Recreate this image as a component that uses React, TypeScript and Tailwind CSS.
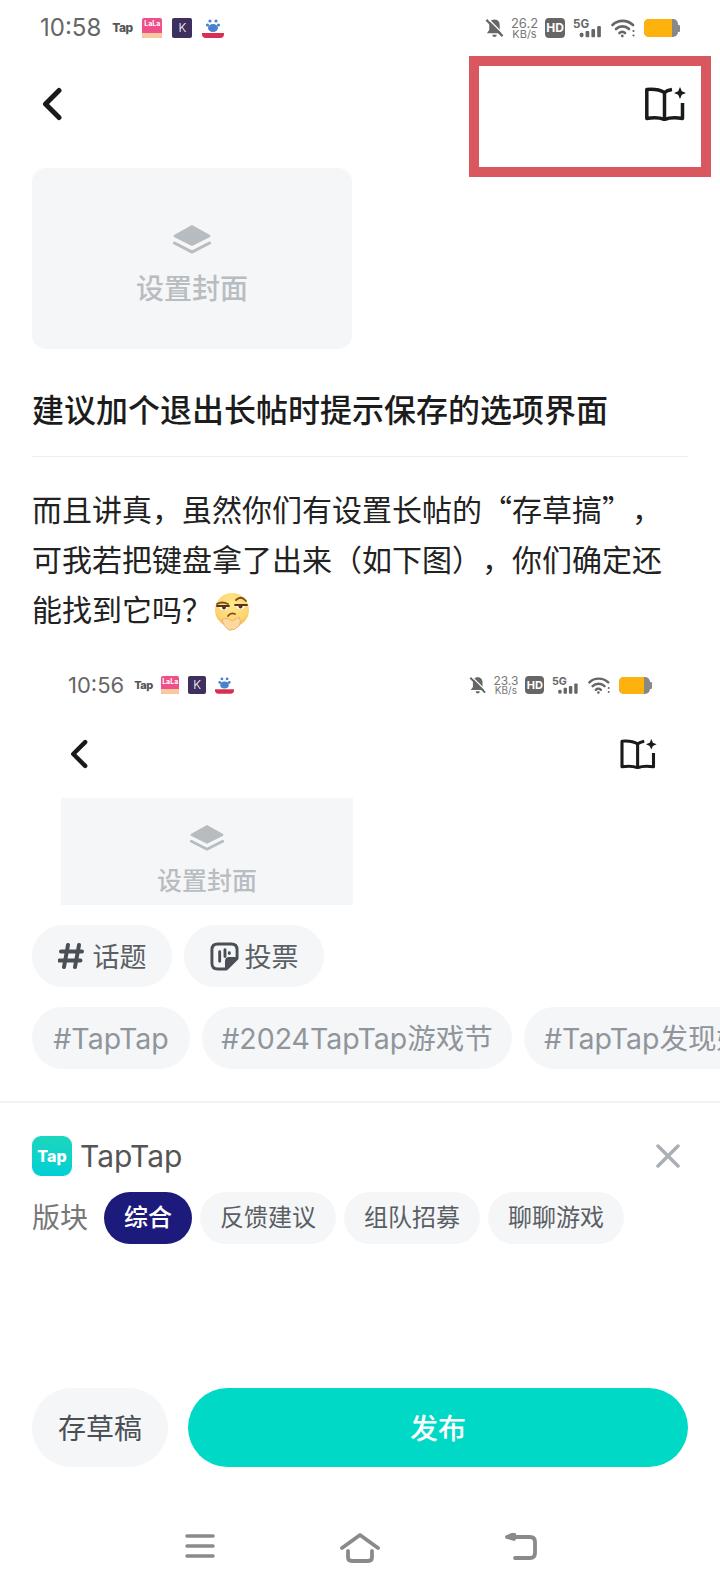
import type { ReactNode } from 'react'

// One status bar, drawn at two sizes: the real one and the one inside the pasted screenshot
function AppBadges({ small }: { small?: boolean }) {
  const box = small ? 'h-[18px] w-[18px]' : 'h-[20px] w-[20px]'
  return (
    <div className={`flex items-center ${small ? 'gap-[9px]' : 'gap-[10px]'}`}>
      <span className={`font-extrabold tracking-[-0.5px] text-[#555] leading-none ${small ? 'w-[18px] text-[11px]' : 'w-[20px] text-[12px]'}`}>Tap</span>
      <div className={`${box} flex flex-col overflow-hidden rounded-[2px] bg-[#f0508a]`}>
        <span className="flex-1 text-center text-[7px] leading-[12px] font-bold text-white">LaLa</span>
        <span className="h-[5px] bg-[#f8c8a0]" />
      </div>
      <div className={`${box} flex items-center justify-center rounded-[2px] bg-[#3e2f5e] text-[12px] leading-none font-light text-white`}>K</div>
      <svg viewBox="0 0 22 20" className={small ? 'h-[18px] w-[19px]' : 'h-[20px] w-[22px]'}>
        <circle cx="8" cy="3" r="1.6" fill="#4a80d0" />
        <circle cx="14" cy="3" r="1.6" fill="#4a80d0" />
        <circle cx="5.5" cy="7" r="1.6" fill="#4a80d0" />
        <circle cx="16.5" cy="7" r="1.6" fill="#4a80d0" />
        <ellipse cx="11" cy="10" rx="5" ry="4" fill="#4a80d0" />
        <path d="M0 15 H22 V16 Q22 20 18 20 H4 Q0 20 0 16 Z" fill="#d83050" />
      </svg>
    </div>
  )
}

function StatusIcons({ speed, small }: { speed: string; small?: boolean }) {
  const k = small ? 0.92 : 1
  return (
    <div className="flex items-center gap-[8px]">
      <svg viewBox="0 0 20 20" width={19 * k} height={20 * k}>
        <path d="M10 1 C6 1 4.5 4 4.5 7 V12 L2 15.5 H18 L15.5 12 V7 C15.5 4 14 1 10 1 Z M7.5 17 H12.5 Q12 19.5 10 19.5 Q8 19.5 7.5 17 Z" fill="#666" />
        <path d="M1.5 1.5 L18.5 18.5" stroke="#666" strokeWidth="2.4" />
        <path d="M3.5 0.5 L20 17" stroke="#fff" strokeWidth="1.4" />
      </svg>
      <div className={`flex flex-col items-center text-[#777] ${small ? 'w-[23px] text-[12px]' : 'w-[25px] text-[13px]'}`}>
        <span className={small ? 'leading-[11px]' : 'leading-[12px]'}>{speed}</span>
        <span className={small ? 'text-[10px] leading-[9px]' : 'text-[11px] leading-[10px]'}>KB/s</span>
      </div>
      <div className={`flex items-center justify-center rounded-[4px] bg-[#666] font-bold text-white ${small ? 'h-[18px] w-[19px] text-[11px]' : 'h-[20px] w-[20px] text-[12px]'}`}>HD</div>
      <svg viewBox="0 0 31 20" width={30 * k} height={20 * k}>
        <text x="0" y="10" fontSize="12" fontWeight="700" fill="#666" fontFamily="Inter, sans-serif">5G</text>
        <rect x="7" y="15" width="3.8" height="4.500" rx="1.5" fill="#666" />
        <rect x="13" y="13" width="3.8" height="6.500" rx="1" fill="#666" />
        <rect x="19" y="11" width="3.8" height="8.500" rx="1" fill="#666" />
        <rect x="25" y="8" width="3.8" height="11.500" rx="1" fill="#666" />
      </svg>
      <svg viewBox="0 0 25 20" width={25 * k} height={20 * k} fill="none" stroke="#666" strokeWidth="2.6" strokeLinecap="round">
        <path d="M1.5 7 C7 1.5 16 1.5 22 7" />
        <path d="M5 11 C8.5 7.5 14.5 7.5 18 11" />
        <path d="M8.5 15 C10 13.500 12.500 13.500 14 15" />
        <circle cx="11.3" cy="18" r="1.4" fill="#666" stroke="none" />
        <circle cx="22.5" cy="13" r="1.1" fill="#666" stroke="none" />
        <circle cx="22.5" cy="17.5" r="1.1" fill="#666" stroke="none" />
      </svg>
      <div className="flex items-center">
        <div className={`flex overflow-hidden rounded-[5px] bg-[#888] ${small ? 'h-[17px] w-[31px]' : 'h-[18px] w-[34px]'}`}>
          <div className={`bg-[#fdb20e] ${small ? 'w-[25px]' : 'w-[28px]'}`} />
        </div>
        <div className="h-[7px] w-[2px] rounded-r-[1px] bg-[#888]" />
      </div>
    </div>
  )
}

function Chevron({ className }: { className: string }) {
  return (
    <svg viewBox="0 0 20 34" className={className} fill="none" stroke="#1a1a1a" strokeWidth="5" strokeLinecap="round" strokeLinejoin="round">
      <path d="M17 3.500 L3.500 17 L17 30.500" />
    </svg>
  )
}

function BookSpark({ className }: { className: string }) {
  return (
    <svg viewBox="0 0 41 34" className={className}>
      <path d="M27 2.500 C24 3 21.500 3.800 19.500 5.500 C15 2.800 8 2 1.800 2.500 V31.500 C8 30.500 15 30.800 19.500 32.500 C24 30.800 31 30.500 37.500 31.500 V16" fill="none" stroke="#1a1a1a" strokeWidth="3.500" strokeLinejoin="round" />
      <path d="M19.500 5.500 V31" stroke="#1a1a1a" strokeWidth="3.500" />
      <path d="M35 0 L36.800 4.200 L41 6 L36.800 7.800 L35 12 L33.200 7.800 L29 6 L33.200 4.200 Z" fill="#1a1a1a" />
    </svg>
  )
}

function Layers({ className }: { className: string }) {
  return (
    <svg viewBox="0 0 38 30" className={className}>
      <path d="M19 0 L37 10 Q38 11 37 12 L19 21 L1 12 Q0 11 1 10 Z" fill="#b6bcbf" />
      <path d="M1.5 18 L19 27 L36.5 18" fill="none" stroke="#b6bcbf" strokeWidth="3" strokeLinecap="round" />
    </svg>
  )
}

function ThinkingFace() {
  return (
    <svg viewBox="0 0 36 38" className="ml-[2px] inline-block h-[38px] w-[36px] align-[-10px]">
      <defs>
        <radialGradient id="face" cx="0.5" cy="0.35" r="0.7">
          <stop offset="0" stopColor="#ffe98f" />
          <stop offset="0.7" stopColor="#fdd56e" />
          <stop offset="1" stopColor="#f2b24f" />
        </radialGradient>
      </defs>
      <circle cx="18" cy="17" r="17" fill="url(#face)" />
      <path d="M3 11 Q8 8 14 11 M22 7 Q27 2 32 8" fill="none" stroke="#7a4a1e" strokeWidth="1.8" strokeLinecap="round" />
      <path d="M4 13 H15 L12 17 H7 Z M21 12 H32 L29 16 H24 Z" fill="#fff" />
      <path d="M3 13 H15 M21 12 H33" stroke="#5a3414" strokeWidth="1.8" strokeLinecap="round" />
      <circle cx="10" cy="14.5" r="2" fill="#5a3414" />
      <circle cx="26.500" cy="13.500" r="2" fill="#5a3414" />
      <path d="M14 23 Q17 19 21 21" fill="none" stroke="#8a4a1e" strokeWidth="1.8" strokeLinecap="round" />
      <path d="M8 26 Q14 24 18 28 L25 24 Q28 28 25 33 Q20 38 15 37 Q9 33 8 26 Z" fill="#fdd9a0" stroke="#efb272" strokeWidth="1" />
    </svg>
  )
}

function Pill({ children, className }: { children: ReactNode; className: string }) {
  return <div className={`flex shrink-0 items-center justify-center rounded-full bg-[#f5f6f8] ${className}`}>{children}</div>
}

const tags = [
  { label: '#TapTap', width: 'w-[158px]' },
  { label: '#2024TapTap游戏节', width: 'w-[310px]' },
  { label: '#TapTap发现好游戏', width: 'w-[298px]' },
]

const boards = ['反馈建议', '组队招募', '聊聊游戏']

// full-width punctuation, written as escapes so it stays full-width
const bodyLines = [
  '而且讲真\uFF0C虽然你们有设置长帖的\u201C存草搞\u201D\uFF0C',
  '可我若把键盘拿了出来\uFF08如下图\uFF09\uFF0C你们确定还',
  '能找到它吗\uFF1F',
]

export default function App() {
  return (
    <div className="relative flex h-[1592px] w-[720px] flex-col overflow-hidden bg-white font-[Inter,'Noto_Sans_CJK_SC',sans-serif]">
      {/* status bar */}
      <div className="flex h-[56px] shrink-0 items-center justify-between px-[40px]">
        <div className="flex items-center gap-[11px]">
          <span className="text-[24px] leading-none text-[#666]">10:58</span>
          <AppBadges />
        </div>
        <StatusIcons speed="26.2" />
      </div>

      {/* header */}
      <div className="flex h-[112px] shrink-0 items-start justify-between pt-[31px] pr-[34px] pl-[42px]">
        <Chevron className="h-[34px] w-[20px]" />
        <BookSpark className="h-[34px] w-[41px]" />
      </div>

      {/* annotation box from the original screenshot */}
      <div className="absolute top-[56px] left-[469px] h-[121px] w-[242px] border-[10px] border-[#d9585f]" />

      {/* cover */}
      <div className="mx-[32px] flex h-[181px] w-[320px] shrink-0 flex-col items-center rounded-[14px] bg-[#f5f6f8] pt-[57px]">
        <Layers className="h-[30px] w-[38px]" />
        <span className="mt-[14px] text-[28px] leading-[40px] font-medium text-[#b8bdc2]">设置封面</span>
      </div>

      <h1 className="mx-[32px] mt-[38px] text-[32px] leading-[48px] font-medium text-[#1c1c1c]">建议加个退出长帖时提示保存的选项界面</h1>
      <div className="mx-[32px] mt-[21px] h-px shrink-0 bg-[#eeeff1]" />

      <p className="mx-[32px] mt-[26px] whitespace-nowrap font-['Noto_Sans_CJK_SC',sans-serif] text-[30px] leading-[50px] text-[#222] [text-spacing-trim:space-all]">
        {bodyLines[0]}
        <br />
        {bodyLines[1]}
        <br />
        {bodyLines[2]}
        <ThinkingFace />
      </p>

      {/* pasted screenshot */}
      <div className="mt-[17px] flex h-[255px] shrink-0 flex-col pl-[61px]">
        <div className="flex h-[70px] shrink-0 items-center justify-between pr-[68px] pl-[7px]">
          <div className="flex items-center gap-[10px]">
            <span className="text-[22px] leading-none text-[#666]">10:56</span>
            <AppBadges small />
          </div>
          <StatusIcons speed="23.3" small />
        </div>
        <div className="flex h-[78px] shrink-0 items-start justify-between pt-[19px] pr-[63px] pl-[9px]">
          <Chevron className="h-[30px] w-[18px]" />
          <BookSpark className="h-[30px] w-[37px]" />
        </div>
        <div className="flex h-[107px] w-[292px] shrink-0 flex-col items-center bg-[#f5f6f8] pt-[27px]">
          <Layers className="h-[27px] w-[34px]" />
          <span className="mt-[10px] text-[25px] leading-[38px] font-medium text-[#b8bdc2]">设置封面</span>
        </div>
      </div>

      {/* topic and poll */}
      <div className="mt-[20px] flex shrink-0 gap-[12px] px-[32px]">
        <Pill className="h-[62px] w-[140px] gap-[9px]">
          <svg viewBox="0 0 26 26" className="h-[26px] w-[26px]" fill="none" stroke="#4a4f55" strokeWidth="4" strokeLinecap="round">
            <path d="M10 2 L6 24 M21 2 L17 24 M3 8.5 H24 M1.5 17.5 H22.5" />
          </svg>
          <span className="pt-[3px] text-[27px] leading-none text-[#5a5f64]">话题</span>
        </Pill>
        <Pill className="h-[62px] w-[140px] gap-[6px]">
          <svg viewBox="0 0 30 30" className="h-[29px] w-[29px]" fill="none" stroke="#4a4f55" strokeWidth="3" strokeLinejoin="round">
            <path d="M8 2 H22 Q28 2 28 8 V17 L17 28 H8 Q2 28 2 22 V8 Q2 2 8 2 Z" />
            <path d="M28 17 H20 Q17 17 17 20 V28" fill="#4a4f55" />
            <path d="M10 10 V20 M15.500 8 V15 M20 11 V12" strokeLinecap="round" />
          </svg>
          <span className="pt-[3px] text-[27px] leading-none text-[#5a5f64]">投票</span>
        </Pill>
      </div>

      {/* suggested tags */}
      <div className="mt-[20px] flex shrink-0 gap-[12px] pl-[32px]">
        {tags.map(tag => (
          <Pill key={tag.label} className={`h-[62px] ${tag.width}`}>
            <span className="pt-[2px] text-[28.5px] leading-none whitespace-nowrap text-[#8f959b]">{tag.label}</span>
          </Pill>
        ))}
      </div>

      <div className="mt-[32px] h-[2px] shrink-0 bg-[#f2f3f5]" />

      {/* board picker */}
      <div className="mt-[33px] flex h-[40px] shrink-0 items-center justify-between pr-[40px] pl-[32px]">
        <div className="flex items-center gap-[8px]">
          <div className="flex h-[40px] w-[40px] items-center justify-center rounded-[9px] bg-gradient-to-b from-[#1cd6bd] to-[#00cfd6] text-[16px] leading-none font-extrabold text-white">Tap</div>
          <span className="text-[30px] leading-none text-[#555]">TapTap</span>
        </div>
        <svg viewBox="0 0 24 24" className="h-[24px] w-[24px]" fill="none" stroke="#a9afb5" strokeWidth="3.500" strokeLinecap="round">
          <path d="M2 2 L22 22 M22 2 L2 22" />
        </svg>
      </div>

      <div className="mt-[16px] flex shrink-0 items-center gap-[8px] pl-[32px]">
        <span className="mr-[8px] text-[28px] leading-none text-[#777]">版块</span>
        <div className="flex h-[52px] w-[88px] items-center justify-center rounded-full bg-[#1c1a7a] text-[24px] leading-none font-medium text-white">综合</div>
        {boards.map(board => (
          <Pill key={board} className="h-[52px] w-[136px]">
            <span className="text-[24px] leading-none text-[#5a5f64]">{board}</span>
          </Pill>
        ))}
      </div>

      {/* actions */}
      <div className="mt-[144px] flex shrink-0 gap-[20px] px-[32px]">
        <Pill className="h-[79px] w-[136px]">
          <span className="pt-[3px] text-[28px] leading-none text-[#4a4f55]">存草稿</span>
        </Pill>
        <button className="h-[79px] w-[500px] rounded-full bg-[#00d9c5] pt-[3px] text-[28px] leading-none font-medium text-white">发布</button>
      </div>

      {/* nav bar */}
      <div className="mt-[66px] flex shrink-0 items-start justify-between pr-[183px] pl-[185px]">
        <svg viewBox="0 0 30 26" className="h-[26px] w-[30px]" fill="none" stroke="#8a8a8a" strokeWidth="3.500" strokeLinecap="round">
          <path d="M2 3 H28 M2 13 H28 M2 23 H28" />
        </svg>
        <svg viewBox="0 0 40 30" className="h-[30px] w-[40px]" fill="none" stroke="#8a8a8a" strokeWidth="3.800" strokeLinecap="round" strokeLinejoin="round">
          <path d="M2 15 L20 2 L38 15" />
          <path d="M8 18 V24 Q8 28 12 28 H28 Q32 28 32 24 V18" />
        </svg>
        <svg viewBox="0 0 32 28" className="h-[28px] w-[32px]" fill="none" stroke="#8a8a8a" strokeWidth="3.800" strokeLinecap="round" strokeLinejoin="round">
          <path d="M3 4 H25 Q30 4 30 9 V20 Q30 25 25 25 H10" />
          <path d="M9 1 L2 4 L9 6" />
        </svg>
      </div>
    </div>
  )
}
